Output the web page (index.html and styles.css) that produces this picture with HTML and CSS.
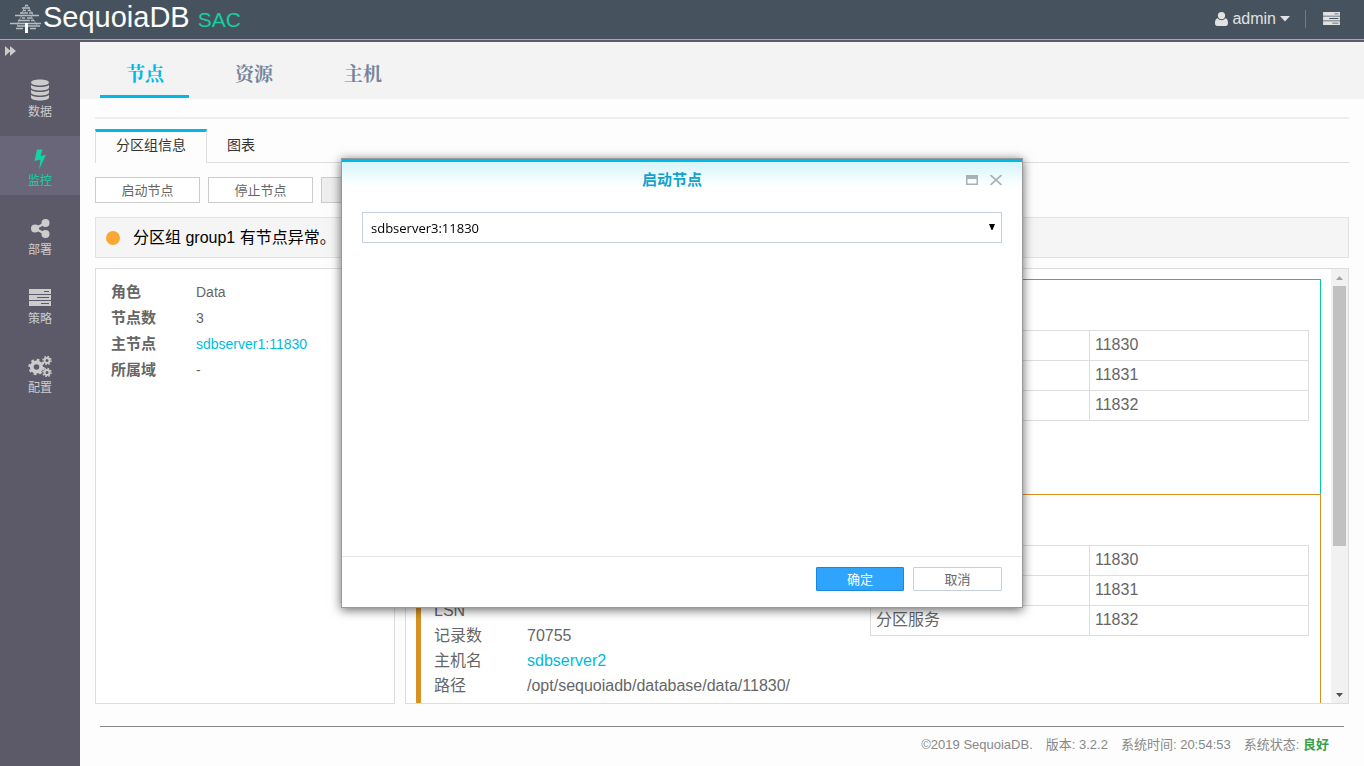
FILE: index.html
```html
<!DOCTYPE html>
<html lang="zh-CN">
<head>
<meta charset="utf-8">
<title>SequoiaDB SAC</title>
<link rel="stylesheet" href="styles.css">
</head>
<body>
<svg class="sprite" aria-hidden="true">
  <symbol id="i-server" viewBox="0 0 22 17">
    <path fill-rule="evenodd" d="M0 0h22v5H0zM15 2v1h5V2zM0 6h22v5H0zM8 8v1h12V8zM0 12h22v5H0zM12 14v1h8v-1z"/>
  </symbol>
</svg>
<div class="app">
  <header class="topbar">
    <div class="brand">
      <svg class="brand-tree" viewBox="0 0 32 30" aria-hidden="true">
        <g stroke="#b4babf" stroke-width="1.3" fill="none">
          <path d="M15 1.500h3M12 4h8M13 6.500h3m1.500 0h3M10 9h8m1 0h4M5 11.500h24M12 14h3m2 0h5M8 16.500h12m1 0h3M0 19.500h31M7 22h8m3 0h12M6 24.500h7M20 24.500h6"/>
          <path d="M16 1l-5 9M17 1l6 10M12 11l-5 10M21 12l6 9" stroke-width=".7"/>
        </g>
        <path d="M15 19h3v10h-3z" fill="#fff"/>
      </svg>
      <span class="brand-name">SequoiaDB</span>
      <span class="brand-sub">SAC</span>
    </div>
    <div class="user-area">
      <button class="user" type="button">
        <svg class="user-icon" viewBox="0 0 13 14" aria-hidden="true"><circle cx="6.500" cy="3.600" r="3.600"/><path d="M2.600 6.300C.8 6.700 0 8.500 0 11.300 0 13 .9 14 2.300 14h8.400c1.400 0 2.300-1 2.300-2.700 0-2.800-.8-4.600-2.600-5-1 1.200-2.300 1.900-3.900 1.900S3.600 7.500 2.600 6.300z"/></svg>
        <span>admin</span>
        <svg class="caret" viewBox="0 0 10 6" aria-hidden="true"><path d="M0 0h10L5 5.500z"/></svg>
      </button>
      <button class="tasks" type="button" aria-label="任务"><svg viewBox="0 0 22 17" aria-hidden="true"><use href="#i-server"/></svg></button>
    </div>
  </header>
  <div class="body">
    <nav class="sidebar">
      <button class="toggle" type="button" aria-label="展开"><svg viewBox="0 0 12 10" aria-hidden="true"><path d="M0 0l5 4.500V0l6 5-6 5V5.500L0 10z"/></svg></button>
      <a class="side-item" href="#">
        <svg class="side-icon" viewBox="0 0 22 22" aria-hidden="true"><path d="M2 3.500C2 1.800 6 .5 11 .5s9 1.300 9 3-4 3-9 3-9-1.300-9-3zM2 6c2 1.500 5 2 9 2s7-.5 9-2v2.500c0 1.700-4 3-9 3s-9-1.300-9-3zM2 11c2 1.500 5 2 9 2s7-.5 9-2v2.500c0 1.700-4 3-9 3s-9-1.300-9-3zM2 16c2 1.500 5 2 9 2s7-.5 9-2v2.500c0 1.700-4 3-9 3s-9-1.300-9-3z"/></svg>
        <span>数据</span>
      </a>
      <a class="side-item active" href="#">
        <svg class="side-icon" viewBox="0 0 22 22" aria-hidden="true"><path d="M8 1.500h5.500L11.500 8l5.500-1.200L10 21.800l1.500-10.300-6 1.500z"/></svg>
        <span>监控</span>
      </a>
      <a class="side-item" href="#">
        <svg class="side-icon" viewBox="0 0 22 22" aria-hidden="true"><circle cx="6" cy="11.500" r="4"/><circle cx="16.500" cy="6" r="4"/><circle cx="16.500" cy="17" r="4"/><path d="M16.500 6L6 11.500 16.500 17" fill="none" stroke="currentColor" stroke-width="2.500"/></svg>
        <span>部署</span>
      </a>
      <a class="side-item" href="#">
        <svg class="side-icon" viewBox="0 -3 22 22" aria-hidden="true"><use href="#i-server" width="22" height="17"/></svg>
        <span>策略</span>
      </a>
      <a class="side-item" href="#">
        <svg class="side-icon wide" viewBox="0 0 24 22" aria-hidden="true">
          <g fill="none" stroke="currentColor">
            <circle cx="8.500" cy="12" r="4.700" stroke-width="3.800"/><circle cx="8.500" cy="12" r="7" stroke-width="2.400" stroke-dasharray="2.750 2.750"/>
            <circle cx="19" cy="5.500" r="2.500" stroke-width="1.900"/><circle cx="19" cy="5.500" r="4" stroke-width="1.500" stroke-dasharray="1.570 1.570"/>
            <circle cx="19" cy="17.500" r="2.500" stroke-width="1.900"/><circle cx="19" cy="17.500" r="4" stroke-width="1.500" stroke-dasharray="1.570 1.570"/>
          </g>
        </svg>
        <span>配置</span>
      </a>
    </nav>
    <main class="main">
      <nav class="page-tabs">
        <a class="page-tab active" href="#">节点</a>
        <a class="page-tab" href="#">资源</a>
        <a class="page-tab" href="#">主机</a>
      </nav>
      <div class="content">
        <div class="sub-tabs">
          <a class="sub-tab active" href="#">分区组信息</a>
          <a class="sub-tab" href="#">图表</a>
        </div>
        <div class="toolbar">
          <button class="tool-btn" type="button">启动节点</button>
          <button class="tool-btn" type="button">停止节点</button>
          <button class="tool-btn" type="button" disabled></button>
        </div>
        <div class="alert"><i class="dot"></i><span>分区组 group1 有节点异常。</span></div>
        <div class="panels">
          <section class="panel info">
            <dl class="info-list">
              <dt>角色</dt><dd>Data</dd>
              <dt>节点数</dt><dd>3</dd>
              <dt>主节点</dt><dd><a href="#">sdbserver1:11830</a></dd>
              <dt>所属域</dt><dd>-</dd>
            </dl>
          </section>
          <section class="panel nodes">
            <div class="node-list">
              <article class="node ok">
                <div></div>
                <table class="ports">
                  <tr><td></td><td>11830</td></tr>
                  <tr><td></td><td>11831</td></tr>
                  <tr><td></td><td>11832</td></tr>
                </table>
              </article>
              <article class="node warn">
                <dl class="node-info">
                  <dt>LSN</dt><dd></dd>
                  <dt>记录数</dt><dd>70755</dd>
                  <dt>主机名</dt><dd><a href="#">sdbserver2</a></dd>
                  <dt>路径</dt><dd>/opt/sequoiadb/database/data/11830/</dd>
                </dl>
                <table class="ports">
                  <tr><td></td><td>11830</td></tr>
                  <tr><td></td><td>11831</td></tr>
                  <tr><td>分区服务</td><td>11832</td></tr>
                </table>
              </article>
            </div>
            <div class="scrollbar" aria-hidden="true">
              <svg class="arrow up" viewBox="0 0 7 4"><path d="M0 4h7L3.500 0z"/></svg>
              <div class="track"><div class="thumb"></div></div>
              <svg class="arrow" viewBox="0 0 7 4"><path d="M0 0h7L3.500 4z"/></svg>
            </div>
          </section>
        </div>
      </div>
      <footer class="footer">
        <span>©2019 SequoiaDB.</span>
        <span>版本: 3.2.2</span>
        <span>系统时间: 20:54:53</span>
        <span>系统状态: <b>良好</b></span>
      </footer>
    </main>
  </div>
</div>
<div class="overlay">
  <div class="dialog" role="dialog" aria-labelledby="dialog-title">
    <div class="dialog-head">
      <h2 id="dialog-title">启动节点</h2>
      <div class="dialog-tools">
        <button type="button" aria-label="最大化"><svg viewBox="0 0 12 10" aria-hidden="true"><path fill-rule="evenodd" d="M0 0h12v10H0zM1.500 4v4.500h9V4z"/></svg></button>
        <button type="button" aria-label="关闭"><svg viewBox="0 0 12 10" aria-hidden="true"><path d="M.5 0l11 10M11.500 0l-11 10" fill="none" stroke="currentColor" stroke-width="1.600"/></svg></button>
      </div>
    </div>
    <div class="dialog-body">
      <div class="select-wrap">
        <select class="node-select" aria-label="节点"><option>sdbserver3:11830</option></select>
        <svg class="select-arrow" viewBox="0 0 6 6" aria-hidden="true"><path d="M0 0h6L3.500 6h-1z"/></svg>
      </div>
    </div>
    <div class="dialog-foot">
      <button class="btn primary" type="button">确定</button>
      <button class="btn" type="button">取消</button>
    </div>
  </div>
</div>
</body>
</html>
```
FILE: styles.css
```css
* { box-sizing: border-box; }
body { margin: 0; color: #666; background: #fdfdfd; font: 14px/20px "Liberation Sans", "Noto Sans CJK SC", sans-serif; }
a { color: inherit; text-decoration: none; }
button { padding: 0; border: 0; background: none; color: inherit; font: inherit; }
svg { display: block; fill: currentColor; }
dl, dd, h2 { margin: 0; }
.sprite { position: absolute; width: 0; height: 0; }
.app { display: flex; flex-direction: column; height: 100vh; }

.topbar { display: flex; justify-content: space-between; align-items: center; height: 40px; flex: none; padding: 0 24px 2px 10px; background: #46535f; border-bottom: 1px solid #a8a8b0; color: #e2e2e2; }
.brand { display: flex; align-items: baseline; line-height: 36px; }
.brand-tree { width: 32px; height: 30px; align-self: center; margin-right: 1px; }
.brand-name { font-size: 29px; color: #fff; }
.brand-sub { margin-left: 8px; font-size: 21px; color: #15cf9e; }
.user-area { display: flex; align-items: center; font-size: 16px; line-height: 18px; }
.user { display: flex; align-items: center; gap: 4px; padding-right: 15px; border-right: 1px solid #77777c; }
.user-icon { width: 13px; height: 14px; }
.caret { width: 10px; height: 6px; }
.tasks { margin-left: 17px; }
.tasks svg { width: 17px; height: 13px; }

.body { display: flex; flex: 1; min-height: 0; }
.sidebar { display: flex; flex-direction: column; gap: 10px; width: 80px; flex: none; background: #5c5a68; color: #ccc; }
.toggle { height: 17px; padding: 4px 5px 0; }
.toggle svg { width: 12px; height: 10px; }
.side-item { display: flex; flex-direction: column; align-items: center; height: 59px; padding-top: 12px; font-size: 12px; line-height: 18px; }
.side-item.active { background: #686678; color: #13d3a2; }
.side-icon { width: 22px; height: 22px; margin-bottom: 2px; }
.side-icon.wide { width: 24px; }

.main { display: flex; flex-direction: column; flex: 1; min-width: 0; border-top: 2px solid #5c5a68; }
.page-tabs { display: flex; gap: 20px; height: 57px; flex: none; padding: 0 20px 1px; background: #f3f3f3; }
.page-tab { width: 89px; padding: 5px 0 0 1px; border-bottom: 3px solid transparent; color: #76839b; font: bold 19px/52px "Noto Serif CJK SC", "Noto Sans CJK SC", serif; text-align: center; }
.page-tab.active { color: #00b9e6; border-color: #00b9e6; }

.content { display: flex; flex-direction: column; flex: 1; min-height: 0; margin: 18px 15px 0; border-top: 2px solid #eee; }
.sub-tabs { display: flex; height: 34px; flex: none; margin-top: 10px; border-bottom: 1px solid #ddd; color: #333; }
.sub-tab { padding: 6px 20px 0; }
.sub-tab.active { width: 112px; height: 34px; padding: 3px 0 0; border: 1px solid #ddd; border-top: 3px solid #00b9e6; border-bottom: 0; background: #fdfdfd; text-align: center; }
.toolbar { display: flex; gap: 8px; margin-top: 14px; }
.tool-btn { width: 105px; height: 26px; padding-top: 2px; border: 1px solid #ccc; background: #fff; font-size: 13px; }
.tool-btn:disabled { background: #eee; }
.alert { display: flex; align-items: center; gap: 13px; height: 41px; flex: none; margin-top: 14px; padding-left: 10px; border: 1px solid #e2e2e2; background: #f5f5f5; color: #000; font-size: 16px; }
.dot { width: 14px; height: 14px; border-radius: 50%; background: #fba733; }
.panels { display: flex; gap: 10px; flex: 1; min-height: 0; margin-top: 10px; }
.panel { border: 1px solid #ddd; background: #fff; }
.info { width: 300px; flex: none; padding: 10px 15px; }
.info-list { display: grid; grid-template-columns: 85px 1fr; line-height: 26px; }
.info-list dt { font-size: 15px; font-weight: bold; }
.info-list a, .node-info a { color: #00bbdd; }
.nodes { display: flex; flex: 1; min-width: 0; }
.node-list { flex: 1; padding: 10px; overflow: hidden; font-size: 16px; line-height: 25px; }
.node { display: grid; grid-template-columns: 436fr 439fr; height: 215px; padding: 50px 11px 0 13px; border: 1px solid; border-left-width: 5px; border-bottom: 0; }
.node.ok { border-color: #00cca3; }
.node.warn { border-color: #d89224; }
.node-info { display: grid; grid-template-columns: 93px 1fr; align-content: start; padding-top: 53px; }
.node-info dt, .node-info dd { height: 25px; color: #666; }
.ports { width: 100%; height: 91px; border-collapse: collapse; table-layout: fixed; line-height: 20px; color: #666; }
.ports td { height: 30px; padding: 0 5px 2px; border: 1px solid #ddd; }
.scrollbar { display: flex; flex-direction: column; align-items: center; width: 17px; padding: 7px 0 6px; background: #f1f1f1; }
.track { flex: 1; width: 13px; padding-top: 6px; }
.thumb { height: 64%; background: #c1c1c1; }
.arrow { width: 7px; height: 4px; color: #505050; }
.arrow.up { color: #a3a3a3; }

.footer { display: flex; justify-content: flex-end; gap: 13px; height: 40px; flex: none; margin: 22px 20px 0; padding: 8px 15px 0; border-top: 1px solid #888; color: #888; font-size: 13px; }
.footer b { color: #3ca04a; }

.overlay { position: fixed; inset: 0; display: grid; place-items: center; }
.dialog { width: 50%; border: 1px solid #999; background: #fff; box-shadow: 0 2px 10px rgba(0, 0, 0, .6); }
.dialog-head { display: grid; grid-template-columns: 1fr auto 1fr; align-items: center; height: 36px; padding-right: 20px; border-top: 3px solid #00b9e6; background: linear-gradient(#d5f5fb, #fff 75%); }
.dialog-head h2 { grid-column: 2; color: #0fa3cf; font-size: 15px; line-height: 22px; padding-top: 3px; }
.dialog-tools { display: flex; justify-content: flex-end; gap: 12px; color: #a9b0b7; padding-top: 3px; }
.dialog-tools svg { width: 12px; height: 10px; }
.dialog-body { min-height: 361px; padding: 17px 20px; }
.select-wrap { position: relative; }
.node-select { display: block; width: 100%; height: 31px; padding: 0 8px; appearance: none; border: 1px solid #c5d0dc; border-radius: 0; background: #fff; color: #000; font: 13px "Open Sans", sans-serif; }
.select-arrow { position: absolute; right: 7px; top: 12px; width: 6px; height: 6px; color: #000; pointer-events: none; }
.dialog-foot { display: flex; justify-content: flex-end; gap: 9px; padding: 10px 20px 16px; border-top: 1px solid #e5e5e5; }
.btn { width: 89px; height: 24px; padding-top: 2px; border: 1px solid #c5d0dc; border-radius: 1px; background: #fff; font-size: 13px; }
.btn.primary { width: 88px; border-color: #1a87dd; background: #2ea4fd; color: #fff; }
```
